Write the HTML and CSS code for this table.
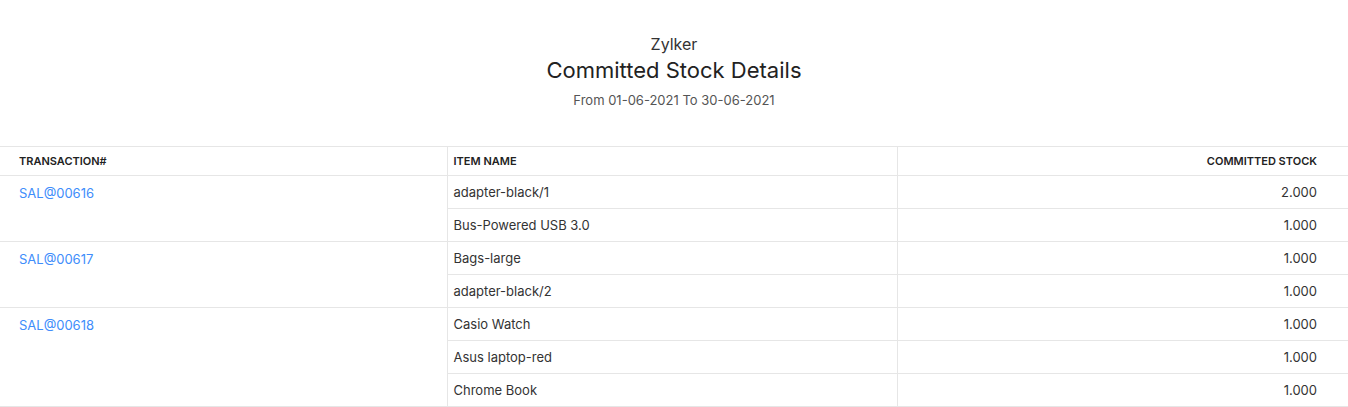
FILE: index.html
```html
<!DOCTYPE html>
<html>
<head>
<meta charset="utf-8">
<link rel="stylesheet" href="styles.css">
</head>
<body>
<div class="report-head">
  <div class="org">Zylker</div>
  <div class="title">Committed Stock Details</div>
  <div class="range">From 01-06-2021 To 30-06-2021</div>
</div>
<table class="report">
  <thead>
    <tr><th class="c1">TRANSACTION#</th><th class="c2">ITEM NAME</th><th class="c3">COMMITTED STOCK</th></tr>
  </thead>
  <tbody>
    <tr><td class="c1" rowspan="2"><a class="link">SAL@00616</a></td><td class="c2">adapter-black/1</td><td class="c3">2.000</td></tr>
    <tr><td class="c2">Bus-Powered USB 3.0</td><td class="c3">1.000</td></tr>
    <tr><td class="c1" rowspan="2"><a class="link">SAL@00617</a></td><td class="c2">Bags-large</td><td class="c3">1.000</td></tr>
    <tr><td class="c2">adapter-black/2</td><td class="c3">1.000</td></tr>
    <tr><td class="c1" rowspan="3"><a class="link">SAL@00618</a></td><td class="c2">Casio Watch</td><td class="c3">1.000</td></tr>
    <tr><td class="c2">Asus laptop-red</td><td class="c3">1.000</td></tr>
    <tr><td class="c2">Chrome Book</td><td class="c3">1.000</td></tr>
  </tbody>
</table>
</body>
</html>
```
FILE: styles.css
```css
html, body {
  margin: 0;
  padding: 0;
  background: #fff;
  font-family: Inter, "Noto Sans", sans-serif;
  color: #333;
}
.report-head {
  text-align: center;
  padding-top: 34px;
  height: 146px;
  box-sizing: border-box;
}
.org {
  font-size: 16px;
  line-height: 20px;
  color: #333;
}
.title {
  font-size: 22px;
  line-height: 32px;
  color: #222;
}
.range {
  font-size: 13px;
  line-height: 16px;
  margin-top: 6px;
  color: #555;
}
.report {
  width: 1348px;
  border-collapse: collapse;
  table-layout: fixed;
}
.report th, .report td {
  border-top: 1px solid #e6e6e6;
  border-bottom: 1px solid #e6e6e6;
  text-align: left;
  padding: 0 6px;
}
.report th {
  font-size: 11px;
  font-weight: 600;
  color: #222;
  height: 28px;
  vertical-align: middle;
}
.report td {
  font-size: 13px;
  height: 32px;
  vertical-align: middle;
}
.report .c1 {
  width: 447px;
  padding-left: 19px;
  box-sizing: border-box;
}
.report .c2 {
  width: 450px;
  border-left: 1px solid #e6e6e6;
  box-sizing: border-box;
}
.report .c3 {
  text-align: right;
  padding-right: 31px;
  border-left: 1px solid #e6e6e6;
}
.report td.c1 {
  vertical-align: top;
  padding-top: 9px;
}
.link {
  color: #408dfb;
  text-decoration: none;
  font-size: 13px;
}
```
